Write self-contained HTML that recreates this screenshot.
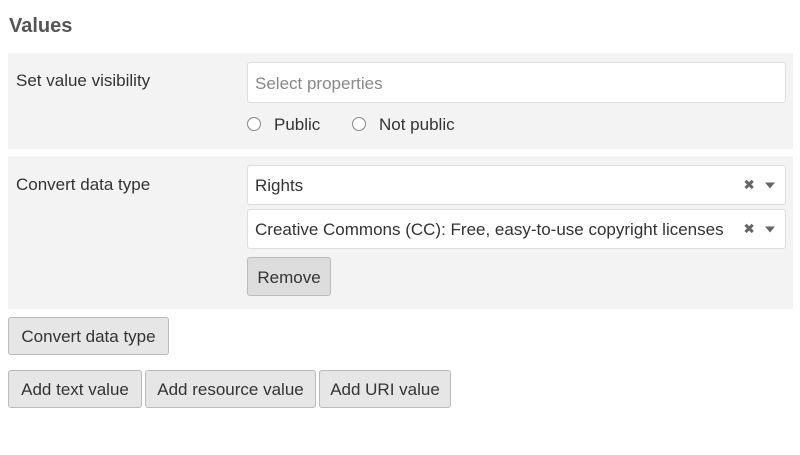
<!DOCTYPE html>
<html><head><style>
*{box-sizing:border-box;margin:0;padding:0}
body{width:800px;height:455px;background:#fff;font-family:"Liberation Sans",sans-serif;color:#333;font-size:17px;position:relative;overflow:hidden}
.a{position:absolute}
h2{position:absolute;left:9px;top:15px;font-size:20px;font-weight:bold;color:#555}
.panel{background:#f3f3f3}
.inp{background:#fff;border:1px solid #ddd;border-radius:3px;padding:0 7px;display:flex;align-items:center;padding-top:2px}
.btn{background:#e6e6e6;border:1px solid #bbb;border-radius:3px;display:flex;align-items:center;justify-content:center;color:#333;font-size:17px;padding-top:2px}
.radio{width:14px;height:14px;border:1px solid #888;border-radius:50%;background:#fff}
.ic{position:absolute;right:10px;top:50%;transform:translateY(-50%);color:#666;font-size:14px;display:flex;gap:10px;align-items:center}
.tri{width:0;height:0;border-left:5px solid transparent;border-right:5px solid transparent;border-top:6px solid #666}
</style></head><body>
<h2>Values</h2>
<div class="a panel" style="left:8px;top:53px;width:785px;height:96px"></div>
<div class="a" style="left:16px;top:71px">Set value visibility</div>
<div class="a inp" style="left:247px;top:62px;width:539px;height:41px;color:#888">Select properties</div>
<div class="a radio" style="left:247px;top:117px"></div>
<div class="a" style="left:274px;top:115px">Public</div>
<div class="a radio" style="left:352px;top:117px"></div>
<div class="a" style="left:379px;top:115px">Not public</div>
<div class="a panel" style="left:8px;top:156px;width:785px;height:153px"></div>
<div class="a" style="left:16px;top:175px">Convert data type</div>
<div class="a inp" style="left:247px;top:165px;width:539px;height:40px">Rights<div class="ic">✖<div class="tri"></div></div></div>
<div class="a inp" style="left:247px;top:209px;width:539px;height:40px">Creative Commons (CC): Free, easy-to-use copyright licenses<div class="ic">✖<div class="tri"></div></div></div>
<div class="a btn" style="left:247px;top:257px;width:84px;height:39px;background:#ddd">Remove</div>
<div class="a btn" style="left:8px;top:317px;width:161px;height:38px">Convert data type</div>
<div class="a btn" style="left:8px;top:370px;width:134px;height:38px">Add text value</div>
<div class="a btn" style="left:145px;top:370px;width:171px;height:38px">Add resource value</div>
<div class="a btn" style="left:319px;top:370px;width:132px;height:38px">Add URI value</div>
</body></html>
